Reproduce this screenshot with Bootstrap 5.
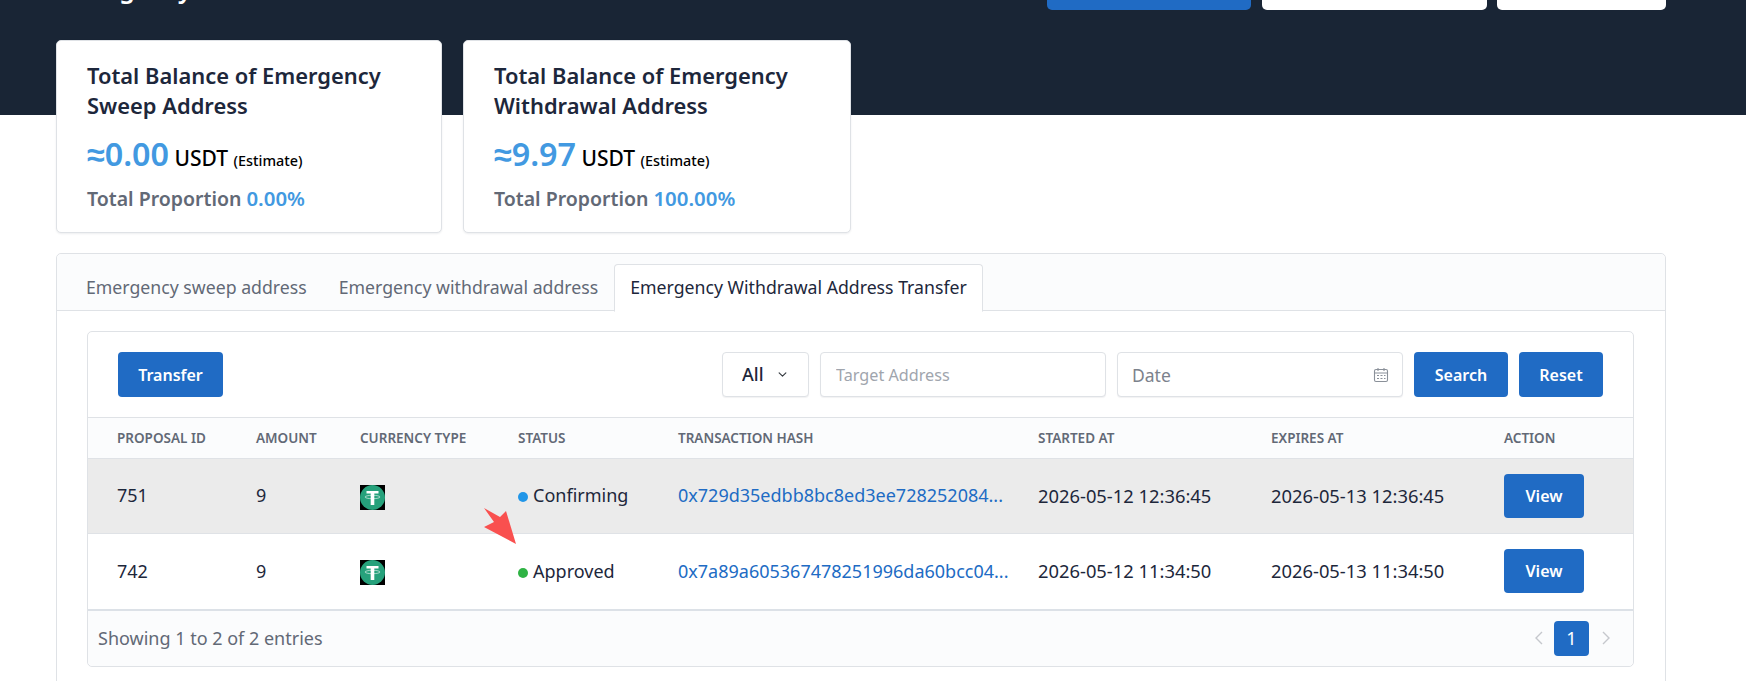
<!DOCTYPE html>
<html lang="en">
<head>
<meta charset="UTF-8">
<title>Emergency Address</title>
<link href="https://cdn.jsdelivr.net/npm/bootstrap@5.3.0/dist/css/bootstrap.min.css" rel="stylesheet">
<style>
    html, body { height: 681px; overflow: hidden; }
    body { font-family: "Noto Sans", sans-serif; color: #1d273b; background: #fff; font-size: 18px; position: relative; }
    .hero { background: #192535; height: 115px; padding: 0 80px 0 56px; }
    .hero-top { height: 10px; overflow: hidden; }
    .hero-title { color: #fff; font-size: 25px; font-weight: 600; line-height: 30px; margin: -27px 0 0; }
    .hero-btns { gap: 10.5px; }
    .hero-btn { width: 225px; height: 40px; margin-top: -40px; background: #fff; border-radius: 0 0 5px 5px; }
    .hero-btn.blue { width: 204px; background: #206bc4; }
    .hero-btn.small { width: 169px; }
    .stats { margin: -75px 80px 0 56px; gap: 21px; }
    .stat { width: 386px; height: 193px; border-color: #dfe2e6; border-radius: 5px; padding: 20px 30px 0; box-shadow: 0 1px 2px rgba(29,39,59,.08); }
    .stat + .stat { width: 388px; }
    .stat h3 { font-size: 21.9px; font-weight: 600; line-height: 30px; margin: 0; color: #1d273b; }
    .stat .amount { margin-top: 8px; line-height: 48px; color: #000; font-weight: 500; font-size: 21px; white-space: nowrap; }
    .stat .amount b { font-size: 32.3px; font-weight: 600; color: #4299e1; }
    .stat .amount small { font-size: 14.4px; }
    .stat .prop { font-size: 19.5px; font-weight: 600; color: #626976; line-height: 30px; margin-top: -2px; }
    .stat .prop span { color: #4299e1; font-size: 20.4px; }
    .panel { margin: 20px 80px 0 56px; height: 500px; border-color: #dfe2e6; border-radius: 5px; }
    .panel .card-header { background: #fbfcfd; padding: 10px 14px 0 13px; border-bottom-color: #dfe2e6; }
    .panel .nav-tabs { border-bottom: 0; margin-bottom: -1px; gap: 0; }
    .panel .nav-link { font-size: 17.7px; line-height: 24px; padding: 10px 15px 12px; color: #626976; border-radius: 4px 4px 0 0; }
    .panel .nav-link.active { color: #1d273b; border-color: #dfe2e6 #dfe2e6 #fff; }
    .inner { margin: 20px 31px 0 30px; height: 336px; border-color: #dfe2e6; border-radius: 5px; }
    .toolbar { padding: 20px 30px 20px 30px; height: 85px; gap: 11px; }
    .btn-tb { background: #206bc4; color: #fff; font-size: 16px; font-weight: 600; height: 45px; border-radius: 4px; padding: 0; border: 0; }
    .btn-tb:hover { background: #1a569d; color: #fff; }
    .btn-transfer { width: 105px; margin-right: auto; }
    .btn-search { width: 94px; }
    .btn-reset { width: 84px; }
    .toolbar .form-select { width: 87px; height: 45px; font-size: 18px; font-weight: 500; color: #1d273b; padding: 0 0 0 19px; border-color: #dfe2e6; border-radius: 4px; background-size: 11px 9px; background-position: right 20px center; box-shadow: 0 1px 1px rgba(29,39,59,.06); }
    .toolbar .form-control { height: 45px; border-color: #dfe2e6; border-radius: 4px; padding-left: 14px; box-shadow: 0 1px 1px rgba(29,39,59,.06); }
    .toolbar .in-target { width: 286px; font-size: 16.2px; padding-left: 15px; }
    .toolbar .in-date { font-size: 17.5px; }
    .in-target::placeholder { color: #a0a5ad; }
    .in-date::placeholder { color: #7c828c; }
    .date-wrap { width: 286px; }
    .cal { position: absolute; right: 14px; top: 15px; }
    .table-wrap { border-top: 1px solid #dfe2e6; }
    .tx { table-layout: fixed; width: 100%; margin: 0; }
    .tx th { background: #fbfcfd; color: #626976; font-size: 13.5px; font-weight: 600; text-transform: uppercase; height: 40px; padding: 0; vertical-align: middle; border-bottom: 1px solid #dfe2e6; }
    .tx td { font-size: 18px; height: 75.5px; padding: 0; vertical-align: middle; color: #1d273b; border-bottom: 1px solid #dfe2e6; background: #fff; box-shadow: none; white-space: nowrap; }
    .tx tr.hl td { background: #ebebeb; }
    .tx td.when { font-size: 18.35px; }
    .tx th:first-child, .tx td:first-child { padding-left: 29px; }
    .c1 { width: 168px; } .c2 { width: 104px; } .c3 { width: 158px; } .c4 { width: 160px; }
    .c5 { width: 360px; } .c6 { width: 233px; } .c7 { width: 233px; }
    .tx a { color: #206bc4; text-decoration: none; font-size: 18px; }
    .dot { display: inline-block; width: 10px; height: 10px; border-radius: 50%; margin-right: 5px; }
    .dot.blue { background: #2196e8; }
    .dot.green { background: #2fb344; }
    .btn-view { width: 80px; height: 44px; }
    .foot { border-top: 2px solid #dce1e7; margin-top: -1px; background: #fbfcfd; height: 57px; padding: 0 0 0 10px; color: #626976; font-size: 18px; border-radius: 0 0 5px 5px; }
    .foot .pagination { margin: 0 11px 0 auto; gap: 0; align-items: center; }
    .foot .page-link { border: 0; background: none; padding: 0; width: 35px; height: 35px; line-height: 35px; text-align: center; font-size: 18px; }
    .foot .page-item.active .page-link { background: #206bc4; color: #fff; border-radius: 4px; }
    .foot .arrow { width: 33px; height: 35px; }
    .red-arrow { position: absolute; left: 483px; top: 507px; }
</style>
</head>
<body>

<div class="hero">
    <div class="hero-top d-flex gap-2">
        <h2 class="hero-title me-auto">Emergency</h2>
    </div>
    <div class="d-flex justify-content-end hero-btns">
        <div class="hero-btn blue"></div>
        <div class="hero-btn"></div>
        <div class="hero-btn small"></div>
    </div>
</div>

<div class="d-flex stats">
    <div class="card stat">
        <h3>Total Balance of Emergency Sweep Address</h3>
        <div class="amount"><b>≈0.00</b> USDT <small>(Estimate)</small></div>
        <div class="prop">Total Proportion <span>0.00%</span></div>
    </div>
    <div class="card stat">
        <h3>Total Balance of Emergency Withdrawal Address</h3>
        <div class="amount"><b>≈9.97</b> USDT <small>(Estimate)</small></div>
        <div class="prop">Total Proportion <span>100.00%</span></div>
    </div>
</div>

<div class="card panel">
    <div class="card-header">
        <ul class="nav nav-tabs">
            <li class="nav-item"><a class="nav-link" href="#">Emergency sweep address</a></li>
            <li class="nav-item"><a class="nav-link" href="#">Emergency withdrawal address</a></li>
            <li class="nav-item"><a class="nav-link active" href="#">Emergency Withdrawal Address Transfer</a></li>
        </ul>
    </div>
    <div class="card inner">
        <div class="d-flex align-items-center toolbar">
            <button class="btn btn-tb btn-transfer">Transfer</button>
            <select class="form-select"><option>All</option></select>
            <input class="form-control in-target" placeholder="Target Address">
            <div class="position-relative date-wrap">
                <input class="form-control in-date" placeholder="Date">
                <svg class="cal" width="16" height="16" viewBox="0 0 16 16" fill="none" stroke="#8a9099" stroke-width="1.1">
                    <rect x="1.5" y="2.5" width="13" height="12" rx="1.5"/>
                    <path d="M1.5 6h13M5 1v3M11 1v3M4 8.500h2M7.500 8.500h2M11 8.500h1.500M4 11.500h2M7.500 11.500h2M11 11.500h1.500"/>
                </svg>
            </div>
            <button class="btn btn-tb btn-search">Search</button>
            <button class="btn btn-tb btn-reset">Reset</button>
        </div>
        <div class="table-wrap">
            <table class="table tx">
                <colgroup>
                    <col class="c1"><col class="c2"><col class="c3"><col class="c4"><col class="c5"><col class="c6"><col class="c7"><col>
                </colgroup>
                <thead>
                    <tr>
                        <th>Proposal ID</th><th>Amount</th><th>Currency Type</th><th>Status</th>
                        <th>Transaction Hash</th><th>Started At</th><th>Expires At</th><th>Action</th>
                    </tr>
                </thead>
                <tbody>
                    <tr class="hl">
                        <td>751</td><td>9</td>
                        <td><svg width="25" height="25" viewBox="0 0 25 25"><use href="#usdt"/></svg></td>
                        <td><span class="dot blue"></span>Confirming</td>
                        <td><a href="#">0x729d35edbb8bc8ed3ee728252084...</a></td>
                        <td class="when">2026-05-12 12:36:45</td><td class="when">2026-05-13 12:36:45</td>
                        <td><button class="btn btn-tb btn-view">View</button></td>
                    </tr>
                    <tr>
                        <td>742</td><td>9</td>
                        <td><svg width="25" height="25" viewBox="0 0 25 25"><use href="#usdt"/></svg></td>
                        <td><span class="dot green"></span>Approved</td>
                        <td><a href="#">0x7a89a605367478251996da60bcc04...</a></td>
                        <td class="when">2026-05-12 11:34:50</td><td class="when">2026-05-13 11:34:50</td>
                        <td><button class="btn btn-tb btn-view">View</button></td>
                    </tr>
                </tbody>
            </table>
        </div>
        <div class="d-flex align-items-center foot">
            <span>Showing 1 to 2 of 2 entries</span>
            <ul class="pagination">
                <li class="page-item arrow d-flex align-items-center justify-content-center">
                    <svg width="10" height="16" viewBox="0 0 10 16" fill="none" stroke="#c5c8cd" stroke-width="1.4"><path d="M8 2 2 8l6 6"/></svg>
                </li>
                <li class="page-item active"><a class="page-link" href="#">1</a></li>
                <li class="page-item arrow d-flex align-items-center justify-content-center">
                    <svg width="10" height="16" viewBox="0 0 10 16" fill="none" stroke="#c5c8cd" stroke-width="1.4"><path d="M2 2l6 6-6 6"/></svg>
                </li>
            </ul>
        </div>
    </div>
</div>

<svg class="red-arrow" width="36" height="40" viewBox="0 0 36 40"><path d="M1 1 17 10 23 4 33 37 1 20 11 15z" fill="#f9504f"/></svg>

<svg class="d-none">
    <symbol id="usdt" viewBox="0 0 25 25">
        <rect width="25" height="25" fill="#000"/>
        <circle cx="12.500" cy="12.500" r="12.500" fill="#26a17b"/>
        <path d="M6.500 6h12v2.600h-4.200V20h-3.600V8.600H6.500z" fill="#fff"/>
        <ellipse cx="12.500" cy="12" rx="7.500" ry="1.700" fill="none" stroke="#fff" stroke-width=".7" opacity=".85"/>
    </symbol>
</svg>

</body>
</html>
